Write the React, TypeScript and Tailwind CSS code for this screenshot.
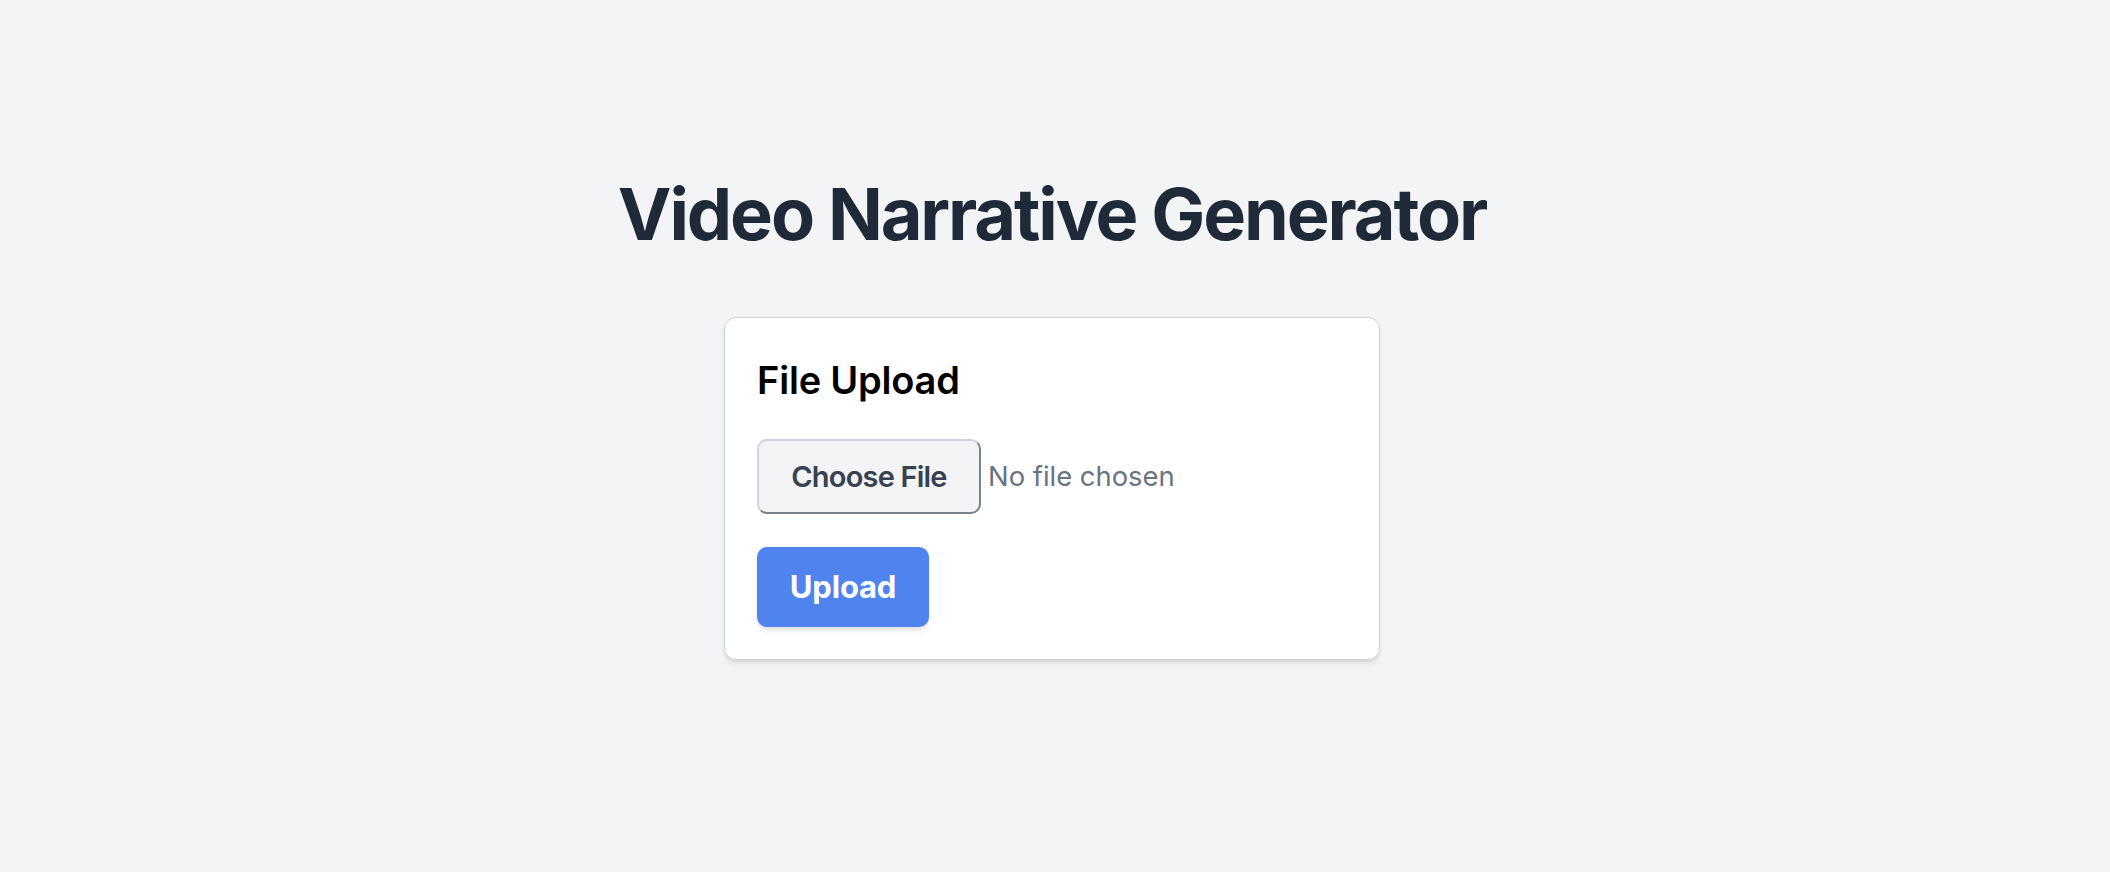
import { useState } from "react";

export default function App() {
  const [fileName, setFileName] = useState<string | null>(null);

  return (
    <main className="min-h-screen w-full bg-[#f3f4f6] font-['Inter',sans-serif] pt-[178px] pr-[6px]">
      <div className="flex flex-col items-center">
        <h1 className="text-[72px] leading-[72px] font-bold text-[#1f2937] tracking-[-2.1px]">
          Video Narrative Generator
        </h1>

        <div className="mt-[67px] w-[656px] bg-white border-[1.5px] border-[#d1d5db] rounded-[12px] shadow-md px-8 pt-[43px] pb-8">
          <h2 className="text-[38px] leading-[38px] font-semibold text-black tracking-[-0.2px]">File Upload</h2>

          <div className="mt-[40px] flex items-center gap-[7px]">
            <label className="w-[224px] h-[75px] flex items-center justify-center bg-[#f3f4f6] border-2 border-[#d1d5db] border-b-[#7d8188] border-r-[#7d8188] rounded-[10px] text-[29px] font-semibold text-[#374151] tracking-[-0.8px] cursor-pointer">
              Choose File
              <input
                type="file"
                className="hidden"
                onChange={(e) => setFileName(e.target.files?.[0]?.name ?? null)}
              />
            </label>
            <span className="text-[27.4px] text-[#6b7280]">{fileName ?? "No file chosen"}</span>
          </div>

          <button className="mt-[33px] w-[172px] h-[80px] bg-[#4f83ee] rounded-[10px] shadow-md text-white text-[31px] font-bold tracking-[-0.2px]">
            Upload
          </button>
        </div>
      </div>
    </main>
  );
}
